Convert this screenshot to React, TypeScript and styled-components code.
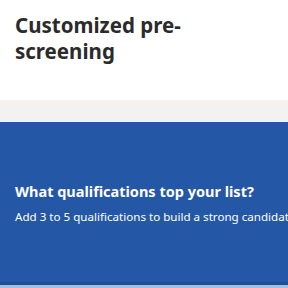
import React from "react";
import styled, { createGlobalStyle } from "styled-components";

const Global = createGlobalStyle`
  html, body {
    margin: 0;
    padding: 0;
    background: #ffffff;
    font-family: "Noto Sans", "Open Sans", sans-serif;
    overflow: hidden;
  }
`;

const Header = styled.div`
  height: 100px;
  padding: 12px 15px 0;
  box-sizing: border-box;
  background: #ffffff;
`;

const Title = styled.h1`
  margin: 0;
  width: 190px;
  font-size: 20.5px;
  line-height: 26px;
  font-weight: 700;
  color: #2b2b2b;
`;

const Band = styled.div`
  height: 22px;
  background: #f3f2f1;
`;

const Panel = styled.div`
  height: 163px;
  padding: 59px 15px 0;
  box-sizing: border-box;
  background: #2557a7;
  border-bottom: 3px solid #1f4f9a;
  color: #ffffff;
  white-space: nowrap;
  overflow: hidden;
`;

const Question = styled.h2`
  margin: 0;
  font-size: 14.5px;
  line-height: 20px;
  font-weight: 700;
`;

const Hint = styled.p`
  margin: 7px 0 0;
  font-size: 11.6px;
  line-height: 18px;
  font-weight: 400;
`;

const Footer = styled.div`
  height: 3px;
  background: #a8bedf;
`;

const App = () => {
  return (
    <>
      <Global />
      <Header>
        <Title>Customized pre-screening</Title>
      </Header>
      <Band />
      <Panel>
        <Question>What qualifications top your list?</Question>
        <Hint>Add 3 to 5 qualifications to build a strong candidate pool.</Hint>
      </Panel>
      <Footer />
    </>
  );
};

export default App;
